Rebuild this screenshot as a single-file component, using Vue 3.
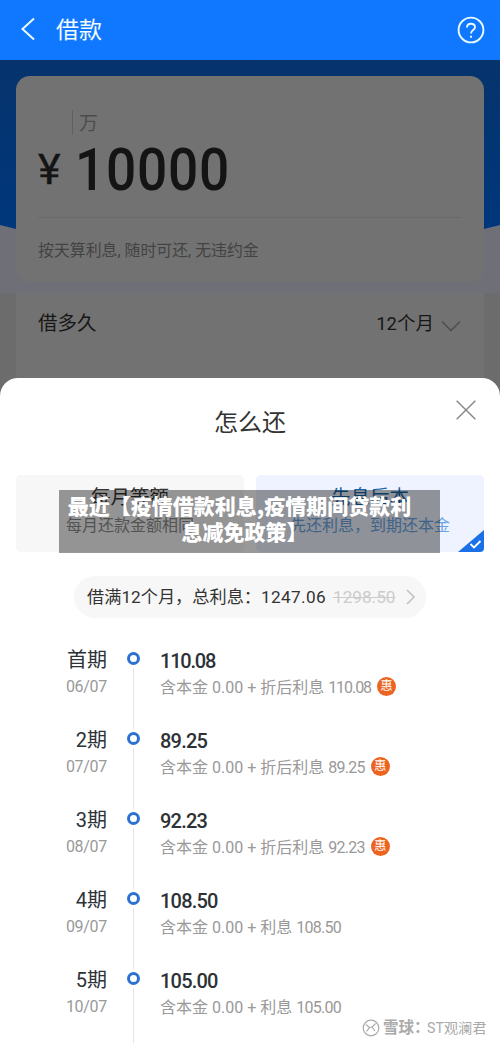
<script setup>
const rows = [
  { term: '首期', date: '06/07', amount: '110.08', kind: '折后利息', deal: true },
  { term: '2期', date: '07/07', amount: '89.25', kind: '折后利息', deal: true },
  { term: '3期', date: '08/07', amount: '92.23', kind: '折后利息', deal: true },
  { term: '4期', date: '09/07', amount: '108.50', kind: '利息', deal: false },
  { term: '5期', date: '10/07', amount: '105.00', kind: '利息', deal: false },
]
</script>

<template>
  <div class="page">
    <header class="bar">
      <svg class="back" width="16" height="24" viewBox="0 0 16 24"><path d="M14 1.500 2.500 12 14 22.500" /></svg>
      <h1>借款</h1>
      <svg class="help" width="28" height="28" viewBox="0 0 28 28">
        <circle cx="14" cy="14" r="12.400" />
        <path d="M10 11.500C10 9 11.600 7.700 14 7.700S18 9.200 18 11.300C18 14.200 14 14 14 17.600" />
        <path d="M14 19.700v2" />
      </svg>
    </header>

    <main class="backdrop">
      <svg class="wave" width="500" height="170" viewBox="0 0 500 170">
        <defs>
          <linearGradient id="sea" x1="0" y1="0" x2="0" y2="1">
            <stop offset="0" stop-color="#06336c" />
            <stop offset="1" stop-color="#00377c" />
          </linearGradient>
        </defs>
        <path d="M0 0H500V165L484 169H16L0 165Z" fill="url(#sea)" />
      </svg>
      <section class="card loan">
        <div class="unit">万</div>
        <div class="money"><span class="yen">¥</span><span class="sum">10000</span></div>
        <p class="note">按天算利息, 随时可还, 无违约金</p>
      </section>
      <section class="card period">
        <span>借多久</span>
        <span class="months">12个月<svg width="20" height="13" viewBox="0 0 20 13"><path d="M1 1.500 10 10.500 19 1.500" /></svg></span>
      </section>
    </main>

    <section class="sheet">
      <h2>怎么还</h2>
      <svg class="close" width="20" height="20" viewBox="0 0 20 20"><path d="M.7.700 19.300 19.300M19.300.700.700 19.300" /></svg>

      <div class="options">
        <div class="option">
          <strong>每月等额</strong>
          <span>每月还款金额相同</span>
        </div>
        <div class="option chosen">
          <strong>先息后本</strong>
          <span>先还利息，到期还本金</span>
          <svg class="tick" width="26" height="22" viewBox="0 0 26 22"><path class="corner" d="M26 0V18Q26 22 22 22H0Z" /><path class="mark" d="M12.500 14 16 17.500 22.500 11" /></svg>
        </div>
        <div class="caption">最近【疫情借款利息,疫情期间贷款利<br /><span class="tail">息减免政策】</span></div>
      </div>

      <div class="total">
        <span>借满12个月，总利息：<span class="figure">1247.06</span></span><s>1298.50</s>
        <svg width="9" height="16" viewBox="0 0 9 16"><path d="M1 1 8 8 1 15" /></svg>
      </div>

      <ul class="plan">
        <li v-for="row in rows" :key="row.term">
          <div class="when"><b>{{ row.term }}</b><span class="date">{{ row.date }}</span></div>
          <div class="rail"><i class="dot"></i></div>
          <div class="what">
            <b :class="{ tight: row.amount.startsWith('11') }">{{ row.amount }}</b>
            <div class="detail">
              <span>含本金 0.00 + {{ row.kind }} <span class="part" :class="{ tight: row.amount.startsWith('11') }">{{ row.amount }}</span></span>
              <em v-if="row.deal">惠</em>
            </div>
          </div>
        </li>
      </ul>

      <div class="source">
        <svg width="18" height="18" viewBox="0 0 18 18"><circle cx="9" cy="9" r="7.800" /><path d="M4 5.500 7.500 8.500 4.500 12.500M13.500 4.500 10 8 13 12M7.500 8.500 10 8" /></svg>
        <span class="brand">雪球：</span><span>ST观澜君</span>
      </div>
    </section>
  </div>
</template>

<style>
body { margin: 0; }
</style>

<style scoped>
* { box-sizing: border-box; }
.page {
  width: 500px;
  height: 1043px;
  overflow: hidden;
  background: #fff;
  font-family: Roboto, "Noto Sans CJK SC", sans-serif;
  color: #333;
}
svg { fill: none; flex: none; }
.bar {
  height: 60px;
  padding: 0 15px 0 20px;
  display: flex;
  align-items: center;
  background: #1078ff;
}
.bar svg { stroke: #e8fbff; }
.back { stroke-width: 2; margin-bottom: 2px; }
.bar h1 { margin: 1px auto 0 20px; font-size: 23px; font-weight: 400; line-height: 34px; color: #f2fcff; }
.help { stroke-width: 1.900; }

.backdrop {
  position: relative;
  height: 338px;
  padding: 16px 16px 0;
  background: linear-gradient(#6f6f77 0 233px, #6c6c6c 233px);
}
.wave { position: absolute; left: 0; top: 0; }
.card { position: relative; background: #727272; }
.loan { height: 206px; border-radius: 14px; padding: 34px 22px 0; }
.unit {
  margin-left: 34px;
  padding-left: 6px;
  height: 25px;
  border-left: 1px solid #606060;
  font-size: 19px;
  line-height: 27px;
  color: #4c4c4c;
}
.money { display: flex; height: 83px; border-bottom: 1px solid #696969; color: #141414; }
.yen { width: 37px; padding-top: 1px; font-size: 43px; line-height: 66px; font-weight: 400; -webkit-text-stroke: .400px #141414; }
.sum {
  padding-top: 2px;
  font-size: 58.500px;
  line-height: 66px;
  font-weight: 500;
  letter-spacing: .800px;
  transform: scaleX(.91);
  transform-origin: left;
}
.note { margin: 20px 0 0; font-size: 15.900px; line-height: 26px; color: #434343; }
.period {
  height: 100px;
  margin-top: 11px;
  padding: 16px 23px 0 22px;
  display: flex;
  justify-content: space-between;
  font-size: 19.500px;
  line-height: 30px;
  color: #171717;
}
.months { display: flex; align-items: center; height: 30px; font-size: 18.500px; }
.months svg { margin: 4px 0 0 7px; stroke: #505050; stroke-width: 1.700; }

.sheet {
  position: relative;
  height: 665px;
  margin-top: -20px;
  padding-top: 27px;
  border-radius: 18px 18px 0 0;
  background: #fff;
}
.sheet h2 { margin: 0; text-align: center; font-size: 24px; font-weight: 400; line-height: 36px; }
.close { position: absolute; right: 24px; top: 22px; stroke: #858585; stroke-width: 1.400; }
.options { position: relative; display: flex; gap: 12px; margin: 34px 16px 0; }
.option {
  position: relative;
  flex: 1;
  height: 77px;
  padding-top: 9px;
  border-radius: 5px;
  background: #f7f7f7;
  display: flex;
  flex-direction: column;
  align-items: center;
}
.option strong { font-size: 19.500px; font-weight: 400; line-height: 28px; }
.option span { margin-top: 2px; font-size: 16px; line-height: 24px; color: #8a8a8a; white-space: nowrap; }
.chosen { background: #eef3ff; }
.chosen strong { color: #1566a8; }
.chosen span { color: #6ba3e2; }
.tick { position: absolute; right: 0; bottom: 0; }
.corner { fill: #1b70e8; }
.mark { stroke: #fff; stroke-width: 1.800; }
.caption {
  position: absolute;
  left: 43px;
  top: 15px;
  width: 381px;
  height: 63px;
  padding: 2px 20px 0 0;
  background: rgba(0, 0, 0, .4);
  color: #fff;
  text-align: center;
  font: 900 21px/26px "Noto Sans CJK SC", sans-serif;
  white-space: nowrap;
}
.tail { margin-left: 10px; }
.total {
  width: 352px;
  height: 42px;
  margin: 24px 0 0 74px;
  padding-left: 13px;
  display: flex;
  align-items: center;
  border-radius: 21px;
  background: #f7f7f7;
  font-size: 17.200px;
  line-height: 26px;
  white-space: nowrap;
}
.figure { letter-spacing: .350px; }
.total s { margin-left: 7px; color: #ccc; }
.total svg { margin-left: 11px; stroke: #c4c4c4; stroke-width: 1.700; }

.plan { list-style: none; margin: 26px 0 0; padding: 0; }
.plan li { display: flex; height: 80px; }
.plan b { display: block; font-weight: 500; color: #2c3236; }
.when { width: 107px; padding-top: 1px; text-align: right; }
.when b { font-size: 20px; line-height: 30px; font-weight: 400; }
.date { display: block; font-size: 16px; line-height: 24px; color: #999; letter-spacing: -.300px; }
.rail {
  width: 53px;
  background: linear-gradient(#e5e5e5, #e5e5e5) 26px 0 / 1px 100% no-repeat;
}
.plan li:first-child .rail { background-position: 26px 22px; }
.dot {
  display: block;
  width: 13px;
  height: 13px;
  margin: 8px 0 0 20px;
  border: 3.500px solid #2c70d2;
  border-radius: 50%;
  background: #fff;
  box-shadow: 0 0 0 3px #fff;
}
.what b { margin-top: 1px; padding-top: 1px; font-size: 20px; line-height: 30px; letter-spacing: -.800px; }
.what b.tight { letter-spacing: -1.200px; }
.detail { display: flex; align-items: center; height: 20px; font-size: 16px; color: #999; white-space: pre; }
.part { letter-spacing: -.700px; }
.part.tight { letter-spacing: -1.050px; }
.detail em {
  width: 19px;
  height: 19px;
  margin-left: 6px;
  border-radius: 50%;
  background: #ec6421;
  color: #fff;
  text-align: center;
  font-style: normal;
  font-size: 12px;
  line-height: 19px;
}
.source {
  position: absolute;
  left: 362px;
  bottom: 4px;
  display: flex;
  align-items: center;
  color: #aaa;
  font-size: 14.200px;
  line-height: 22px;
  white-space: nowrap;
}
.source svg { stroke: #aaa; stroke-width: 1.200; }
.brand { margin-left: 3px; width: 44px; font-size: 15.500px; font-weight: 700; }
</style>
